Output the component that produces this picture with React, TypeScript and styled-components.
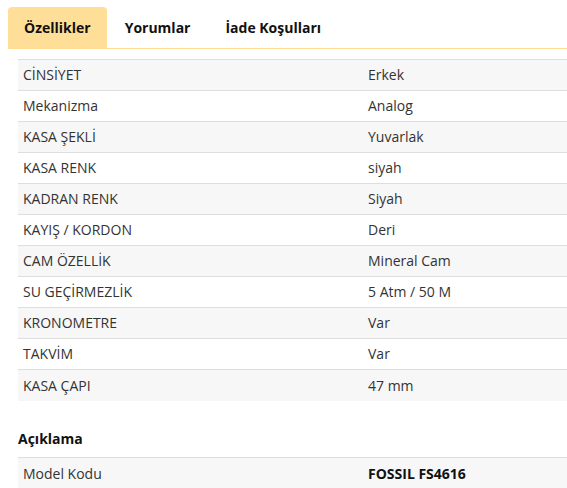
import React from "react";
import styled, { createGlobalStyle } from "styled-components";

const Global = createGlobalStyle`
  html, body { margin: 0; padding: 0; background: #fff; }
  body { font-family: "Open Sans", "Liberation Sans", sans-serif; color: #333; }
`;

const Page = styled.div`
  padding: 7px 0 0 8px;
`;

const TabBar = styled.div`
  display: flex;
  border-bottom: 1px solid #ffdb8f;
`;

const Tab = styled.div<{ $active?: boolean }>`
  height: 41px;
  padding: 0 ${(p) => (p.$active ? "16px" : "17px")};
  margin-left: ${(p) => (p.$active ? "0" : "1px")};
  display: flex;
  align-items: center;
  font-size: 14px;
  font-weight: 700;
  color: #111;
  border-radius: 4px 4px 0 0;
  background: ${(p) => (p.$active ? "#ffdf98" : "transparent")};
`;

const Body = styled.div`
  padding: 10px 0 0 10px;
`;

const Table = styled.div`
  border-top: 1px solid #dedede;
`;

const Row = styled.div<{ $shade?: boolean }>`
  display: grid;
  grid-template-columns: 350px 1fr;
  height: 31px;
  padding-bottom: 1px;
  box-sizing: border-box;
  align-items: center;
  border-bottom: 1px solid #dedede;
  background: ${(p) => (p.$shade ? "#f7f7f7" : "#fff")};
  font-size: 14px;
  color: #333;
  &:last-child { border-bottom: none; }
`;

const Label = styled.div`
  padding-left: 5px;
`;

const Value = styled.div<{ $bold?: boolean }>`
  font-weight: ${(p) => (p.$bold ? 700 : 400)};
  color: ${(p) => (p.$bold ? "#111" : "#333")};
`;

const Heading = styled.div`
  font-size: 14px;
  font-weight: 700;
  color: #111;
  margin: 27px 0 0 0;
  height: 29px;
  line-height: 22px;
`;

const specs: [string, string][] = [
  ["CİNSİYET", "Erkek"],
  ["Mekanizma", "Analog"],
  ["KASA ŞEKLİ", "Yuvarlak"],
  ["KASA RENK", "siyah"],
  ["KADRAN RENK", "Siyah"],
  ["KAYIŞ / KORDON", "Deri"],
  ["CAM ÖZELLİK", "Mineral Cam"],
  ["SU GEÇİRMEZLİK", "5 Atm / 50 M"],
  ["KRONOMETRE", "Var"],
  ["TAKVİM", "Var"],
  ["KASA ÇAPI", "47 mm"],
];

export default function App() {
  return (
    <>
      <Global />
      <Page>
        <TabBar>
          <Tab $active>Özellikler</Tab>
          <Tab>Yorumlar</Tab>
          <Tab>İade Koşulları</Tab>
        </TabBar>
        <Body>
          <Table>
            {specs.map(([k, v], i) => (
              <Row key={k} $shade={i % 2 === 0}>
                <Label>{k}</Label>
                <Value>{v}</Value>
              </Row>
            ))}
          </Table>
          <Heading>Açıklama</Heading>
          <Table>
            <Row $shade>
              <Label>Model Kodu</Label>
              <Value $bold>FOSSIL FS4616</Value>
            </Row>
          </Table>
        </Body>
      </Page>
    </>
  );
}
